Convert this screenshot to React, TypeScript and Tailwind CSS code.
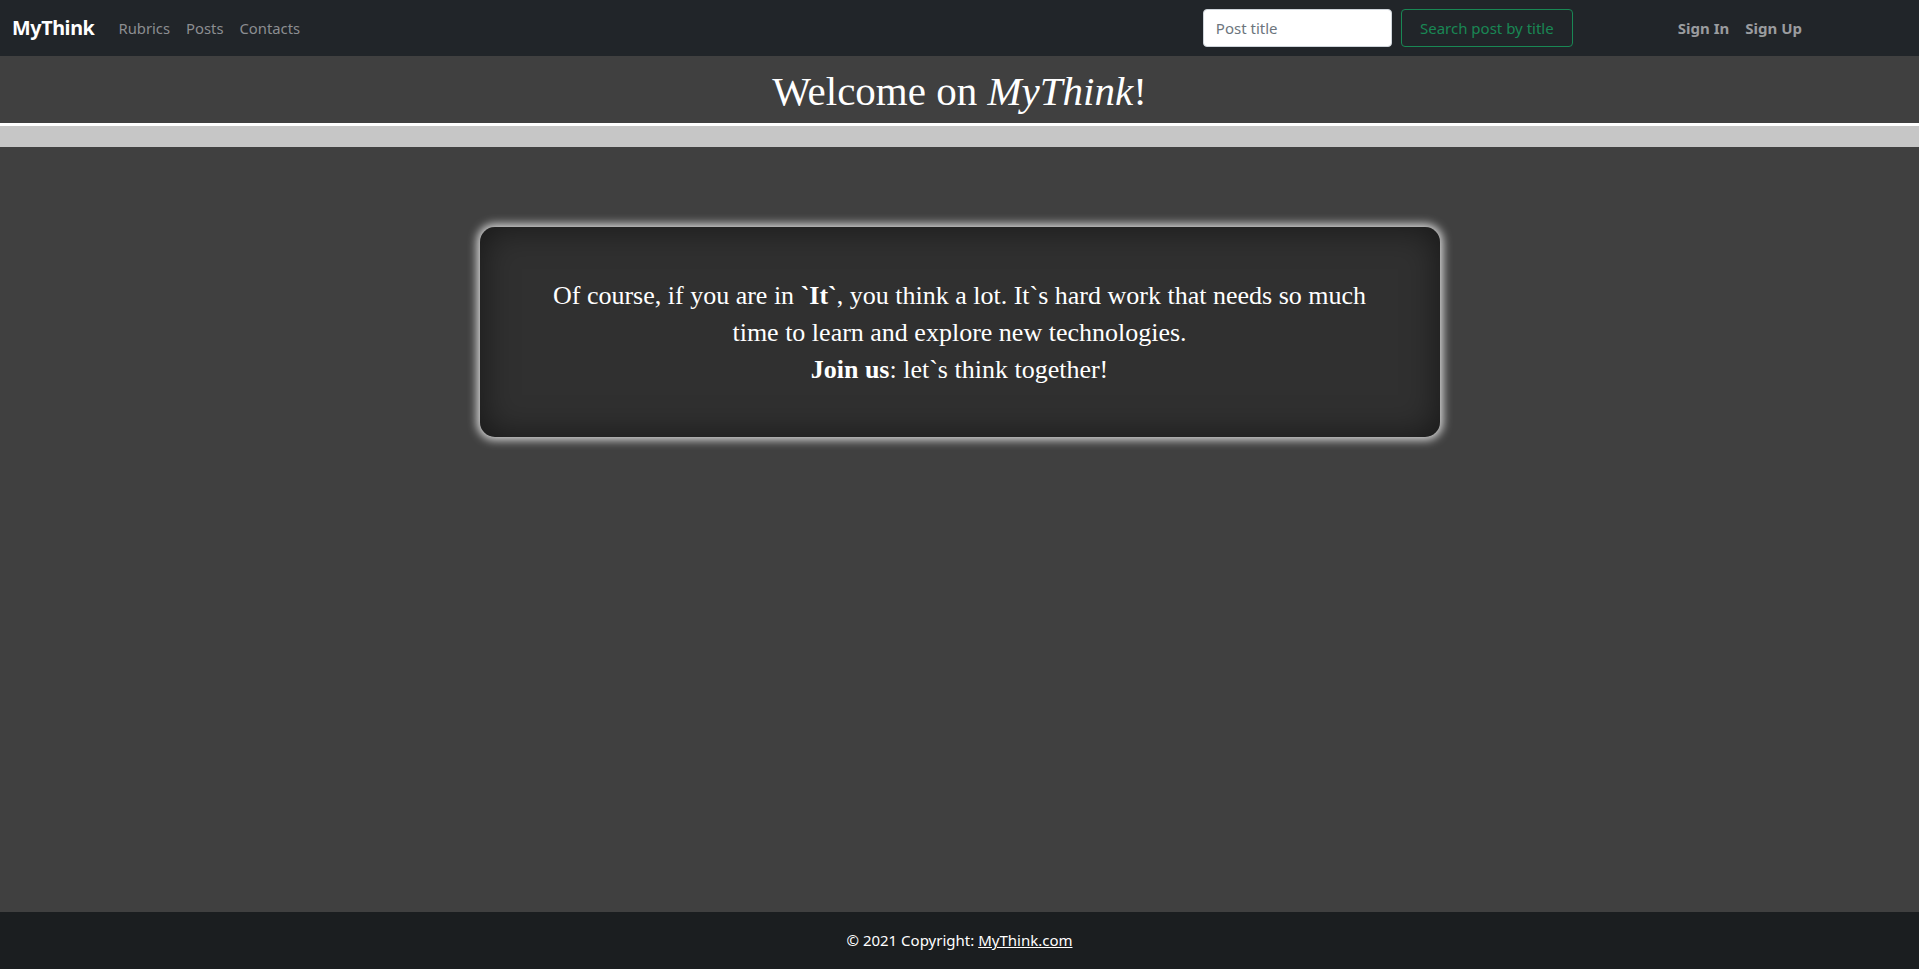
import React from "react";

export default function App() {
  const sans = "font-['Segoe_UI','Noto_Sans','Open_Sans',sans-serif]";
  return (
    <div className={`min-h-[969px] flex flex-col bg-[#404040] ${sans}`}>
      <nav className="h-[56px] bg-[#212529] flex items-center pl-[12px] pr-[115px]">
        <span className="text-white font-bold text-[19.8px] mr-[16px] tracking-[-0.4px]">MyThink</span>
        <div className="flex items-center text-[14.8px] text-[#8c8e91]">
          <span className="px-[8px]">Rubrics</span>
          <span className="px-[8px]">Posts</span>
          <span className="px-[8px]">Contacts</span>
        </div>
        <div className="flex-1" />
        <div className="flex items-center gap-[9px]">
          <div className="w-[189px] h-[38px] bg-white rounded-[4px] border border-[#ced4da] flex items-center px-[12px] text-[15px] text-[#6c757d]">
            Post title
          </div>
          <div className="w-[172px] h-[38px] rounded-[4px] border border-[#198754] flex items-center justify-center text-[15px] text-[#198754]">
            Search post by title
          </div>
        </div>
        <div className="flex items-center ml-[103px] gap-[12px] text-[15px] font-bold text-[#9a9c9f]">
          <span className="px-[2px]">Sign In</span>
          <span className="px-[2px]">Sign Up</span>
        </div>
      </nav>
      <div className="h-[67px] bg-[#404040] flex items-center justify-center">
        <h1 className="text-white text-[41px] font-['Liberation_Serif',serif] leading-none pt-[4px]">
          Welcome on <i>MyThink</i>!
        </h1>
      </div>
      <div className="h-[3px] bg-white" />
      <div className="h-[21px] bg-[#c6c6c6]" />
      <main className="flex-1 flex justify-center pt-[80px]">
        <div className="w-[960px] h-[210px] rounded-[15px] bg-[#303030] shadow-[0_0_10px_3px_rgba(255,255,255,0.8),inset_0_0_35px_rgba(0,0,0,0.55)] flex items-center justify-center px-[50px]">
          <p className="text-white text-center text-[26px] leading-[37px] font-['Liberation_Serif',serif] max-w-[860px]">
            Of course, if you are in <b>`It`</b>, you think a lot. It`s hard work that needs so much time to learn and explore new technologies.
            <br />
            <b>Join us</b>: let`s think together!
          </p>
        </div>
      </main>
      <footer className="h-[57px] bg-[#1b1e20] flex items-center justify-center text-white text-[15px]">
        <span>
          © 2021 Copyright: <span className="underline">MyThink.com</span>
        </span>
      </footer>
    </div>
  );
}
